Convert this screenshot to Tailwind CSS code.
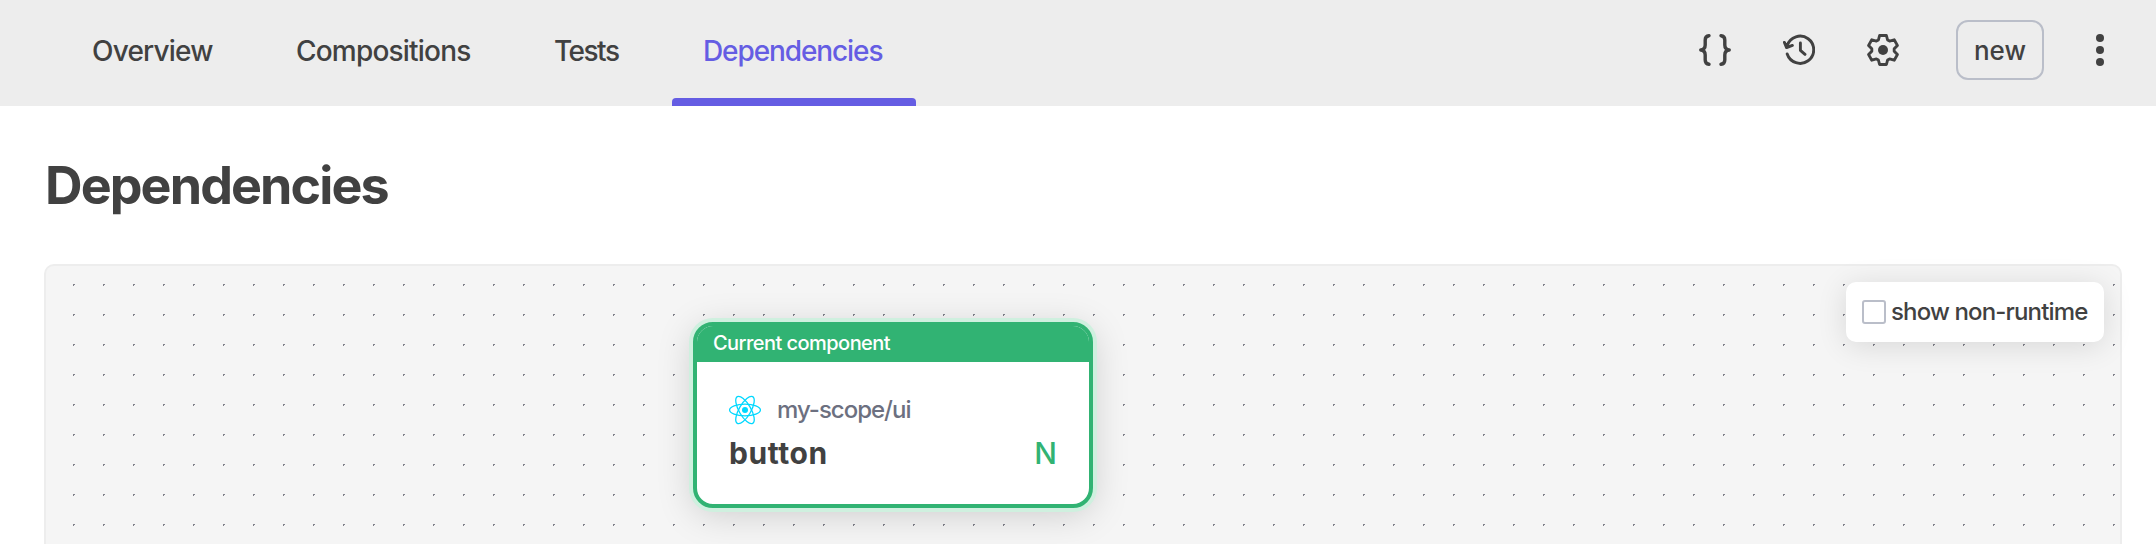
<!DOCTYPE html>
<html lang="en">
<head>
<meta charset="utf-8">
<title>Dependencies</title>
<script src="https://cdn.jsdelivr.net/npm/@tailwindcss/browser@4"></script>
</head>
<body class="h-[544px] overflow-hidden bg-white font-['Inter',sans-serif] text-[#414141]">
<header class="flex h-[106px] items-start justify-between bg-[#ededed] pr-[40px] pl-[50px]">
  <nav class="flex h-full text-[28px] leading-[102px] font-medium tracking-[-0.8px] whitespace-nowrap">
    <a class="w-[204px] pl-[42px]"><span>Overview</span></a>
    <a class="w-[258px] pl-[42px]"><span>Compositions</span></a>
    <a class="w-[160px] pl-[42px] tracking-[-1.5px]"><span>Tests</span></a>
    <a class="relative w-[244px] pl-[31px] tracking-[-1.1px] text-[#655de3]"><span>Dependencies</span><i class="absolute bottom-0 left-0 h-2 w-full rounded-t bg-[#655de3]"></i></a>
  </nav>
  <div class="flex h-[100px] items-center">
    <svg class="mr-[52px] size-8" viewBox="0 0 32 32" fill="none" stroke="#414141" stroke-width="3.4" stroke-linecap="round" stroke-linejoin="round"><path d="M10 1.7C7 2 6.200 3.600 6.200 6v5c0 3-1.500 4.600-4.400 5 2.900.4 4.400 2 4.400 5v5c0 2.400.8 4 3.800 4.300M22 1.700c3 .3 3.800 1.900 3.800 4.300v5c0 3 1.500 4.600 4.400 5-2.900.4-4.400 2-4.400 5v5c0 2.400-.8 4-3.800 4.300"/></svg>
    <svg class="mr-[52px] size-8" viewBox="0 0 32 32" fill="none" stroke="#414141" stroke-width="2.900" stroke-linecap="round" stroke-linejoin="round"><path d="M4.200 11.500A13.600 13.600 0 1 1 4.200 20M1.400 8.400l2.200 5.200 5.800-2.200M17.400 9v7.400l4.600 4"/></svg>
    <svg class="mr-[57px] size-8" viewBox="0 0 32 32" fill="none" stroke="#414141" stroke-width="2.900" stroke-linejoin="round"><path d="M12.600 1.500h6.800l1.200 4.500 2 1.100 4.600-1.300 3.200 5.600-3.200 3.400v2.400l3.200 3.400-3.200 5.600-4.600-1.300-2 1.100-1.200 4.500h-6.800L11.400 26l-2-1.100-4.600 1.300-3.200-5.600 3.200-3.400v-2.400l-3.200-3.400 3.200-5.600 4.600 1.300 2-1.100z"/><circle cx="16" cy="16" r="5" fill="#414141" stroke="none"/></svg>
    <button class="mr-[40px] h-[60px] w-[88px] rounded-xl border-2 border-[#babec9] text-[26px] font-medium"><span>new</span></button>
    <svg class="h-8 w-8" viewBox="0 0 32 32" fill="#414141"><circle cx="16" cy="4" r="4"/><circle cx="16" cy="16" r="4"/><circle cx="16" cy="28" r="4"/></svg>
  </div>
</header>
<main class="pr-[34px] pl-[44px]">
  <h1 class="h-[158px] pt-[44px] pl-px text-[52px] leading-[72px] font-bold tracking-[-1.9px]"><span>Dependencies</span></h1>
  <section class="relative h-[280px] rounded-t-[10px] border-2 border-b-0 border-[#ededed] bg-[#f5f5f5]">
    <svg class="absolute inset-0 size-full"><defs><pattern id="grid" x="27" y="18" width="30" height="30" patternUnits="userSpaceOnUse"><path d="M0 0h2v1H1v1H0z" fill="#81818a"/></pattern></defs><rect width="100%" height="100%" fill="url(#grid)"/></svg>
    <article class="absolute top-[56px] left-[647px] h-[186px] w-[400px] overflow-hidden rounded-[20px] border-4 border-[#31b373] bg-white shadow-[0_0_0_4px_#cff0df,0_6px_36px_rgba(0,0,0,0.17)]">
      <div class="h-9 bg-[#31b373] pl-4 text-[20px] leading-[35px] font-medium tracking-[-0.55px] text-white"><span>Current component</span></div>
      <div class="mt-8 flex h-8 items-center pl-8">
        <svg class="size-8" viewBox="-16 -16 32 32" fill="none" stroke="#00d8ff" stroke-width="1.300"><circle r="3" fill="#00d8ff" stroke="none"/><ellipse rx="15.400" ry="5.900"/><ellipse rx="15.400" ry="5.900" transform="rotate(60)"/><ellipse rx="15.400" ry="5.900" transform="rotate(120)"/></svg>
        <span class="ml-[16px] text-[24px] leading-8 font-medium tracking-[-1px] text-[#6c7080]">my-scope/ui</span>
      </div>
      <div class="mt-[5px] flex items-center justify-between pr-[32px] pl-8 text-[30px] leading-[44px]"><span class="font-bold tracking-[0.6px]">button</span><span class="font-medium text-[#31b373]">N</span></div>
    </article>
    <label class="absolute top-[16px] right-[16px] flex h-[60px] w-[258px] items-center rounded-[10px] bg-white pl-4 text-[24px] font-medium tracking-[-0.85px] whitespace-nowrap shadow-[0_4px_30px_rgba(0,0,0,0.12)]">
      <i class="mr-[5px] size-6 rounded-[3px] border-2 border-[#babec9]"></i><span>show non-runtime</span>
    </label>
  </section>
</main>
</body>
</html>
